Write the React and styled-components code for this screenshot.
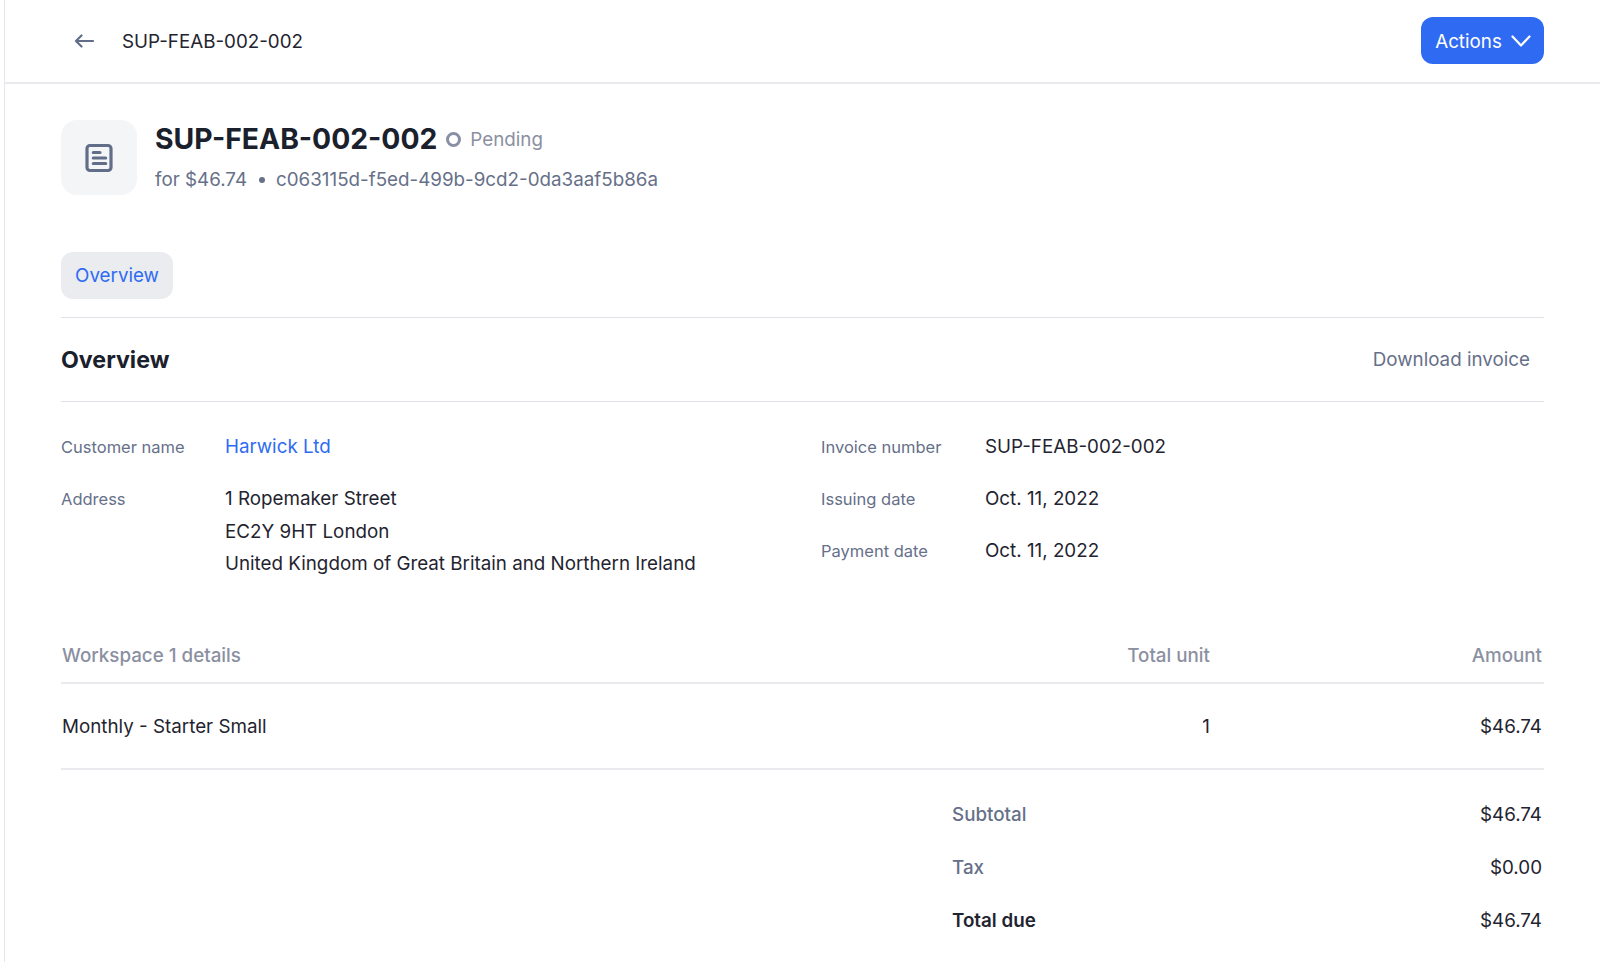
import styled, { createGlobalStyle } from "styled-components";

const GlobalStyle = createGlobalStyle`
    html, body {
        margin: 0;
        padding: 0;
        height: 100%;
        background: #fff;
        overflow: hidden;
    }
    body {
        font-family: Inter, "Liberation Sans", sans-serif;
        color: #1a202c;
        -webkit-font-smoothing: antialiased;
    }
`;

const Page = styled.div`
    margin-left: 4px;
    border-left: 1px solid #e5e7eb;
    height: 962px;
    box-sizing: border-box;
`;

const TopBar = styled.header`
    height: 84px;
    box-sizing: border-box;
    border-bottom: 2px solid #e8eaee;
    display: flex;
    align-items: center;
    justify-content: space-between;
    padding: 0 56px 1px 69px;
`;

const BackGroup = styled.div`
    display: flex;
    align-items: center;
    gap: 28px;
    padding-top: 1px;
    font-size: 18.8px;
    color: #1f2430;
`;

const ActionsButton = styled.button`
    width: 123px;
    height: 47px;
    padding: 1px 0 0 1px;
    border: none;
    border-radius: 12px;
    background: #2f6bf2;
    color: #fff;
    font: 400 18.8px Inter, sans-serif;
    display: flex;
    align-items: center;
    justify-content: center;
    gap: 9px;
`;

const Content = styled.main`
    padding: 36px 56px 0 56px;
`;

const Hero = styled.section`
    display: flex;
    gap: 18px;
`;

const IconBox = styled.div`
    width: 76px;
    height: 75px;
    border-radius: 16px;
    background: #f4f5f7;
    display: flex;
    align-items: center;
    justify-content: center;
`;

const HeroText = styled.div`
    display: flex;
    flex-direction: column;
    gap: 10px;
`;

const TitleRow = styled.div`
    display: flex;
    align-items: center;
    gap: 9px;
    height: 38px;
`;

const Title = styled.h1`
    margin: 0;
    font-size: 28.3px;
    font-weight: 700;
    color: #1a202c;
`;

const StatusDot = styled.span`
    width: 15px;
    height: 15px;
    box-sizing: border-box;
    border: 3px solid #8a90a3;
    border-radius: 50%;
`;

const StatusText = styled.span`
    font-size: 18.8px;
    color: #8b90a1;
`;

const SubLine = styled.div`
    display: flex;
    align-items: center;
    gap: 11.5px;
    font-size: 18.8px;
    color: #667089;
`;

const Bullet = styled.span`
    width: 6px;
    height: 6px;
    border-radius: 50%;
    background: #667089;
`;

const Tabs = styled.nav`
    margin-top: 57px;
    padding-bottom: 18px;
    border-bottom: 1px solid #dfe2e7;
`;

const Tab = styled.div`
    width: 112px;
    height: 47px;
    border-radius: 12px;
    background: #eaecf0;
    color: #2f6bf2;
    font-size: 18.8px;
    display: flex;
    align-items: center;
    justify-content: center;
`;

const SectionHead = styled.div`
    height: 84px;
    box-sizing: border-box;
    border-bottom: 1px solid #dfe2e7;
    display: flex;
    align-items: center;
    justify-content: space-between;
    padding-right: 14px;
`;

const SectionTitle = styled.h2`
    margin: 0;
    font-size: 23.2px;
    font-weight: 700;
    color: #1a202c;
`;

const GhostLink = styled.span`
    font-size: 18.8px;
    color: #667089;
`;

const Details = styled.section`
    display: grid;
    grid-template-columns: 760px 1fr;
    padding-top: 29px;
`;

const DetailCol = styled.div`
    display: flex;
    flex-direction: column;
    gap: 19.4px;
`;

const DetailRow = styled.div`
    display: grid;
    grid-template-columns: 164px 1fr;
    align-items: start;
`;

const Label = styled.span`
    font-size: 16.5px;
    line-height: 32px;
    color: #667089;
`;

const Value = styled.div`
    font-size: 18.8px;
    line-height: 32.6px;
    color: ${(p) => (p.$link ? "#2f6bf2" : "#1f2430")};
`;

const LineTable = styled.section`
    margin-top: 47.6px;
`;

const TableRow = styled.div`
    display: grid;
    grid-template-columns: 1fr 120px 332px;
    align-items: center;
    padding: 0 2px 0 1px;
    font-size: 18.8px;
    color: #1f2430;
`;

const TableHead = styled(TableRow)`
    height: 56px;
    box-sizing: border-box;
    border-bottom: 2px solid #e8eaee;
    font-weight: 500;
    color: #8b90a1;
`;

const TableBody = styled(TableRow)`
    height: 86px;
    box-sizing: border-box;
    border-bottom: 2px solid #e8eaee;
`;

const RightCell = styled.span`
    text-align: right;
`;

const Totals = styled.section`
    margin-left: 891px;
    padding: 18px 2px 0 0;
    display: flex;
    flex-direction: column;
`;

const TotalRow = styled.div`
    height: 53px;
    display: flex;
    align-items: center;
    justify-content: space-between;
    font-size: 18.8px;
    color: #1f2430;
`;

const TotalLabel = styled.span`
    font-weight: ${(p) => (p.$strong ? 600 : 500)};
    color: ${(p) => (p.$strong ? "#1f2430" : "#667089")};
`;

function BackArrow() {
    return (
        <svg width="20" height="14" viewBox="0 0 20 14" fill="none">
            <path d="M19 7H2M7.5 1.5 2 7l5.5 5.5" stroke="#626d8a" strokeWidth="2.2" strokeLinecap="round" strokeLinejoin="round" />
        </svg>
    );
}

function ActionsChevron() {
    return (
        <svg width="20" height="14" viewBox="0 0 20 14" fill="none">
            <path d="M1.5 2.5 10 11.5 18.5 2.5" stroke="#fff" strokeWidth="2.2" strokeLinecap="round" strokeLinejoin="round" />
        </svg>
    );
}

function DocIcon() {
    return (
        <svg width="30" height="30" viewBox="0 0 30 30" fill="none">
            <rect x="3" y="2.5" width="24" height="25" rx="3" stroke="#626d8a" strokeWidth="3.2" />
            <path d="M9.3 9.5H16M9.3 15H21.7M9.3 20.5H21.7" stroke="#626d8a" strokeWidth="3.2" strokeLinecap="round" />
        </svg>
    );
}

function App() {
    return (
        <>
            <GlobalStyle />
            <Page>
                <TopBar>
                    <BackGroup>
                        <BackArrow />
                        <span>SUP-FEAB-002-002</span>
                    </BackGroup>
                    <ActionsButton>
                        Actions
                        <ActionsChevron />
                    </ActionsButton>
                </TopBar>
                <Content>
                    <Hero>
                        <IconBox>
                            <DocIcon />
                        </IconBox>
                        <HeroText>
                            <TitleRow>
                                <Title>SUP-FEAB-002-002</Title>
                                <StatusDot />
                                <StatusText>Pending</StatusText>
                            </TitleRow>
                            <SubLine>
                                <span>for $46.74</span>
                                <Bullet />
                                <span>c063115d-f5ed-499b-9cd2-0da3aaf5b86a</span>
                            </SubLine>
                        </HeroText>
                    </Hero>
                    <Tabs>
                        <Tab>Overview</Tab>
                    </Tabs>
                    <SectionHead>
                        <SectionTitle>Overview</SectionTitle>
                        <GhostLink>Download invoice</GhostLink>
                    </SectionHead>
                    <Details>
                        <DetailCol>
                            <DetailRow>
                                <Label>Customer name</Label>
                                <Value $link>Harwick Ltd</Value>
                            </DetailRow>
                            <DetailRow>
                                <Label>Address</Label>
                                <Value>
                                    1 Ropemaker Street
                                    <br />
                                    EC2Y 9HT London
                                    <br />
                                    United Kingdom of Great Britain and Northern Ireland
                                </Value>
                            </DetailRow>
                        </DetailCol>
                        <DetailCol>
                            <DetailRow>
                                <Label>Invoice number</Label>
                                <Value>SUP-FEAB-002-002</Value>
                            </DetailRow>
                            <DetailRow>
                                <Label>Issuing date</Label>
                                <Value>Oct. 11, 2022</Value>
                            </DetailRow>
                            <DetailRow>
                                <Label>Payment date</Label>
                                <Value>Oct. 11, 2022</Value>
                            </DetailRow>
                        </DetailCol>
                    </Details>
                    <LineTable>
                        <TableHead>
                            <span>Workspace 1 details</span>
                            <RightCell>Total unit</RightCell>
                            <RightCell>Amount</RightCell>
                        </TableHead>
                        <TableBody>
                            <span>Monthly - Starter Small</span>
                            <RightCell>1</RightCell>
                            <RightCell>$46.74</RightCell>
                        </TableBody>
                    </LineTable>
                    <Totals>
                        <TotalRow>
                            <TotalLabel>Subtotal</TotalLabel>
                            <span>$46.74</span>
                        </TotalRow>
                        <TotalRow>
                            <TotalLabel>Tax</TotalLabel>
                            <span>$0.00</span>
                        </TotalRow>
                        <TotalRow>
                            <TotalLabel $strong>Total due</TotalLabel>
                            <span>$46.74</span>
                        </TotalRow>
                    </Totals>
                </Content>
            </Page>
        </>
    );
}

export default App;
